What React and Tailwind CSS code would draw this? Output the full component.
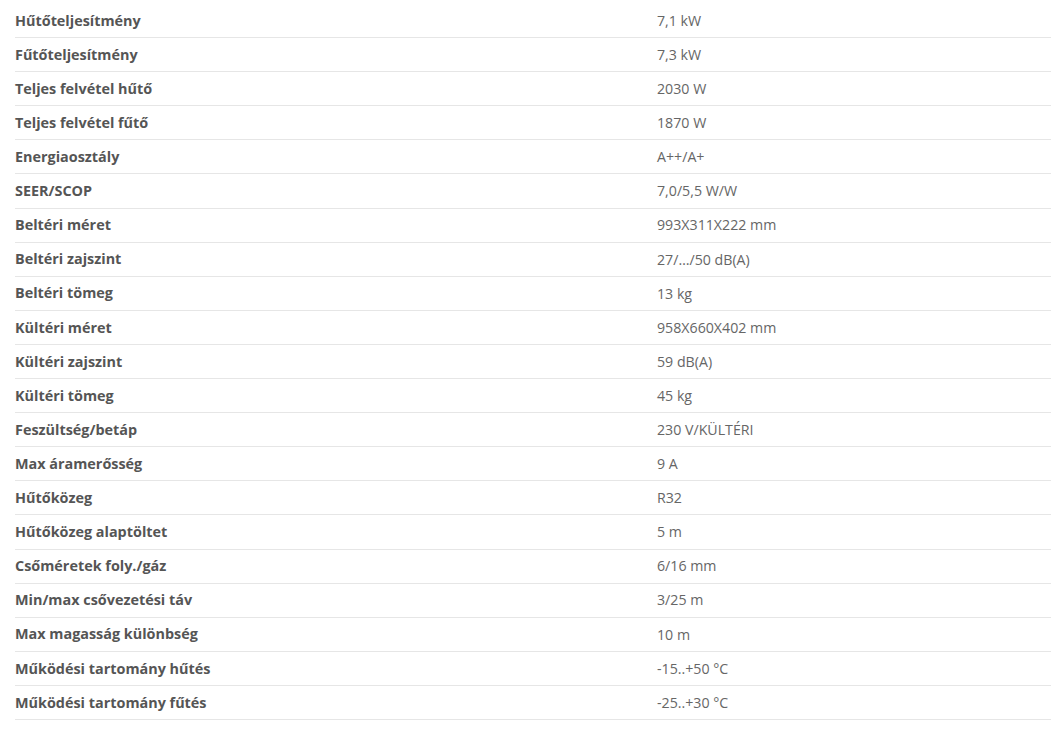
const specs = [
  ['Hűtőteljesítmény', '7,1 kW'],
  ['Fűtőteljesítmény', '7,3 kW'],
  ['Teljes felvétel hűtő', '2030 W'],
  ['Teljes felvétel fűtő', '1870 W'],
  ['Energiaosztály', 'A++/A+'],
  ['SEER/SCOP', '7,0/5,5 W/W'],
  ['Beltéri méret', '993X311X222 mm'],
  ['Beltéri zajszint', '27/…/50 dB(A)'],
  ['Beltéri tömeg', '13 kg'],
  ['Kültéri méret', '958X660X402 mm'],
  ['Kültéri zajszint', '59 dB(A)'],
  ['Kültéri tömeg', '45 kg'],
  ['Feszültség/betáp', '230 V/KÜLTÉRI'],
  ['Max áramerősség', '9 A'],
  ['Hűtőközeg', 'R32'],
  ['Hűtőközeg alaptöltet', '5 m'],
  ['Csőméretek foly./gáz', '6/16 mm'],
  ['Min/max csővezetési táv', '3/25 m'],
  ['Max magasság különbség', '10 m'],
  ['Működési tartomány hűtés', '-15..+50 °C'],
  ['Működési tartomány fűtés', '-25..+30 °C'],
];

export default function App() {
  return (
    <div className="bg-white min-h-screen pt-[4px] pl-[15px] pr-[2px] font-['Open_Sans',sans-serif]">
      {specs.map(([label, value]) => (
        <div
          key={label}
          className="grid grid-cols-[642px_1fr] items-center h-[34.1px] border-b border-[#e6e6e6]"
        >
          <div className="text-[14.4px] font-bold text-[#555]">{label}</div>
          <div className="text-[14.2px] text-[#666]">{value}</div>
        </div>
      ))}
    </div>
  );
}
